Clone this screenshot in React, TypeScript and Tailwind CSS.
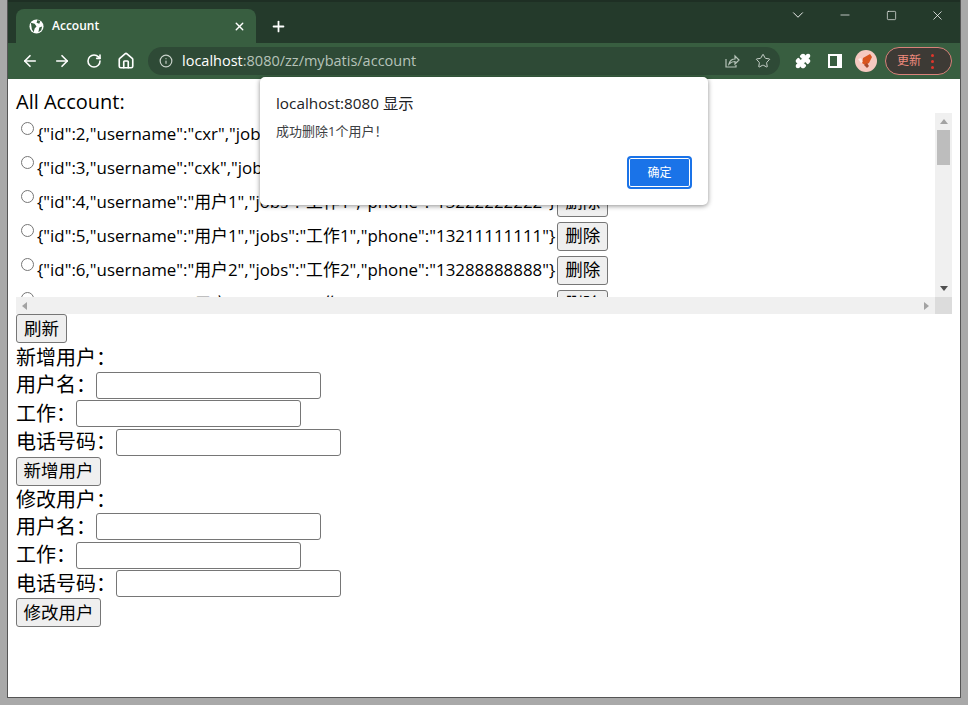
import { ArrowLeft, ArrowRight, ChevronDown, Home, Info, Minus, Plus, Puzzle, RotateCw, Square, Star, X } from "lucide-react";

const rows = [
  { id: 2, name: "cxr", job: "工作", phone: "13222222222" },
  { id: 3, name: "cxk", job: "工作", phone: "13222222222" },
  { id: 4, name: "用户1", job: "工作1", phone: "13222222222" },
  { id: 5, name: "用户1", job: "工作1", phone: "13211111111" },
  { id: 6, name: "用户2", job: "工作2", phone: "13288888888" },
  { id: 7, name: "用户3", job: "工作3", phone: "13233333333" },
];

const font = "font-['Open_Sans','Noto_Sans_CJK_SC',sans-serif]";

function NativeButton({ children, wide }: { children: string; wide?: boolean }) {
  return (
    <button
      type="button"
      className={`h-[29px] shrink-0 rounded-[3px] border border-[#767676] bg-[#efefef] text-[17.5px] leading-none text-black ${wide ? "w-[85px]" : "w-[51px]"}`}
    >
      {children}
    </button>
  );
}

function Field({ label }: { label: string }) {
  return (
    <div className="flex h-[28.5px] items-center">
      <span className="text-[20px]">{label}</span>
      <input className="h-[27px] w-[225px] rounded-[3px] border border-[#767676] bg-white" />
    </div>
  );
}

function UserForm({ title, action }: { title: string; action: string }) {
  return (
    <div>
      <div className="h-[27px] text-[20px] leading-[27px]">{title}</div>
      <Field label="用户名：" />
      <Field label="工作：" />
      <Field label="电话号码：" />
      <NativeButton wide>{action}</NativeButton>
    </div>
  );
}

function Avatar() {
  return (
    <svg width="22" height="22" viewBox="0 0 22 22">
      <circle cx="11" cy="11" r="11" fill="#f6c9c0" />
      <path d="M8 8 15 4l2 3-3 6-4 2-3-2z" fill="#d9541e" />
      <path d="M9 15l3 3 2-2-2-3z" fill="#a8492c" />
      <path d="M3 9l3 4 2-1-2-4z" fill="#fff" opacity="0.6" />
    </svg>
  );
}

export default function App() {
  return (
    <div className={`${font} relative flex h-[705px] w-[968px] flex-col overflow-hidden bg-[#a9a9a9] text-black`}>
      <div className="ml-[7px] mr-[7px] flex h-[698px] flex-col border-x border-b border-[#555]">
        {/* tab strip */}
        <div className="flex h-[43px] items-end border-t-2 border-[#1e2f24] bg-[#243a2b] pl-[8px]">
          <div className="flex h-[34px] w-[240px] items-center rounded-t-[8px] bg-[#385e40] pl-[13px] pr-[10px] text-white">
            <svg width="15" height="15" viewBox="0 0 16 16">
              <circle cx="8" cy="8" r="7.5" fill="#fff" />
              <path d="M2 4l4 1 2 3-2 2-1 4-2-3zM9 1l3 1-1 3-3-1zM11 9l3-1-1 4-3 2z" fill="#385e40" />
            </svg>
            <span className="ml-[8px] flex-1 text-[12px] font-semibold">Account</span>
            <X size={13} strokeWidth={2.5} />
          </div>
          <div className="flex h-[34px] w-[44px] items-center justify-center text-white">
            <Plus size={17} strokeWidth={2.5} />
          </div>
          <div className="flex-1" />
          <div className="mb-[19px] flex items-center text-white">
            <ChevronDown size={18} strokeWidth={1.2} className="mr-[31px]" />
            <Minus size={14} strokeWidth={1.2} className="mr-[34px]" />
            <Square size={11} strokeWidth={1.4} className="mr-[33px]" />
            <X size={15} strokeWidth={1.2} className="mr-[15px]" />
          </div>
        </div>

        {/* toolbar */}
        <div className="flex h-[36px] items-center bg-[#385e40] text-white">
          <ArrowLeft size={18} strokeWidth={2.2} className="ml-[13px]" />
          <ArrowRight size={18} strokeWidth={2.2} className="ml-[14px]" />
          <RotateCw size={16} strokeWidth={2.4} className="ml-[15px]" />
          <Home size={18} strokeWidth={2.2} className="ml-[15px]" />
          <div className="ml-[13px] flex h-[28px] w-[632px] shrink-0 items-center rounded-full bg-[#2e4a36] pl-[11px] pr-[9px]">
            <Info size={14} className="text-[#c9d2cb]" />
            <span className="ml-[9px] flex-1 text-[14.5px]">
              localhost<span className="text-[#b6c3b9]">:8080/zz/mybatis/account</span>
            </span>
            <svg width="17" height="17" viewBox="0 0 17 17" fill="none" stroke="#b6c3b9" strokeWidth="1.2">
              <path d="M3 6v8h10v-2M6 11c1-4 3-5 6-5V3l4 4-4 4V8.500c-2 0-4 .5-6 2.500z" />
            </svg>
            <Star size={16} strokeWidth={1.5} className="ml-[15px] text-[#c9d2cb]" />
          </div>
          <Puzzle size={16} fill="#fff" className="ml-[15px] shrink-0" />
          <svg width="14" height="14" viewBox="0 0 14 14" className="ml-[17px] shrink-0">
            <path d="M0 0h14v14H0z" fill="#fff" />
            <path d="M2 2h7v10H2z" fill="#385e40" />
          </svg>
          <div className="ml-[13px] shrink-0"><Avatar /></div>
          <div className="ml-[8px] flex h-[28px] w-[67px] shrink-0 items-center rounded-full border border-[#d9827a] bg-[#3d3a35] pl-[11px] text-[12px] text-[#ef8a7e]">
            更新
            <span className="ml-[10px] flex flex-col gap-[3px]">
              <i className="size-[3px] rounded-full bg-[#e0352b]" />
              <i className="size-[3px] rounded-full bg-[#e0352b]" />
              <i className="size-[3px] rounded-full bg-[#e0352b]" />
            </span>
          </div>
        </div>

        {/* page */}
        <div className="flex-1 bg-white pl-[8px] pr-[8px]">
          <div className="h-[34px] pt-[8px] text-[20px] leading-[30px]">All Account:</div>
          <div className="flex h-[201px] flex-col">
            <div className="flex h-[184px] overflow-hidden">
              <div className="flex-1 overflow-hidden pt-[4px]">
                {rows.map((row) => (
                  <div key={row.id} className="flex h-[34px] items-center whitespace-nowrap text-[16.9px]">
                    <input type="radio" className="mb-[11px] ml-[5px] mr-[3px] size-[13px]" />
                    <span>{`{"id":${row.id},"username":"${row.name}","jobs":"${row.job}","phone":"${row.phone}"}`}</span>
                    <span className="ml-[2px]"><NativeButton>删除</NativeButton></span>
                  </div>
                ))}
              </div>
              <div className="flex w-[17px] flex-col items-center bg-[#f0f0f0]">
                <i className="mt-[6px] border-x-[4px] border-b-[5px] border-x-transparent border-b-[#a3a3a3]" />
                <i className="mt-[6px] h-[35px] w-[13px] bg-[#bdbdbd]" />
                <i className="mt-auto mb-[6px] border-x-[4px] border-t-[5px] border-x-transparent border-t-[#505050]" />
              </div>
            </div>
            <div className="flex h-[17px] items-center bg-[#f0f0f0]">
              <i className="ml-[6px] border-y-[4px] border-r-[5px] border-y-transparent border-r-[#a3a3a3]" />
              <i className="ml-auto mr-[6px] border-y-[4px] border-l-[5px] border-y-transparent border-l-[#a3a3a3]" />
              <i className="h-[17px] w-[17px] bg-[#dcdcdc]" />
            </div>
          </div>
          <NativeButton>刷新</NativeButton>
          <div className="pt-[1px]">
            <UserForm title="新增用户：" action="新增用户" />
          </div>
          <UserForm title="修改用户：" action="修改用户" />
        </div>
      </div>

      {/* alert */}
      <div className="absolute left-[260px] top-[77px] flex h-[128px] w-[448px] flex-col rounded-[5px] bg-white pl-[16px] pr-[16px] shadow-[0_1px_5px_rgba(0,0,0,0.45)]">
        <div className="mt-[16px] text-[15.3px] leading-[20px] text-[#202124]">localhost:8080 显示</div>
        <div className="mt-[9px] text-[13px] leading-[18px] text-[#3c4043]">成功删除1个用户！</div>
        <div className="mt-auto mb-[16px] flex justify-end">
          <div className="flex h-[33px] w-[65px] items-center justify-center rounded-[4px] border-2 border-[#1a73e8] bg-[#1a73e8] text-[12px] text-white shadow-[inset_0_0_0_1px_#fff]">
            确定
          </div>
        </div>
      </div>
    </div>
  );
}
